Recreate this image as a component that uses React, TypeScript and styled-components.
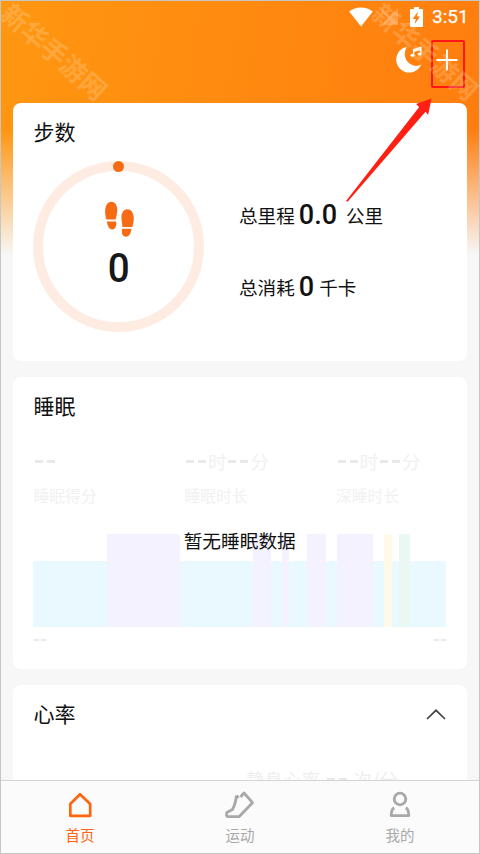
import React from 'react';
import styled, { createGlobalStyle } from 'styled-components';

const Global = createGlobalStyle`
  * { box-sizing: border-box; }
  body { margin: 0; overflow: hidden; }
`;

const cjk = `"Noto Sans CJK SC", sans-serif`;
const roboto = `Roboto, "Noto Sans CJK SC", sans-serif`;

const Screen = styled.div`
  position: relative;
  width: 480px;
  height: 854px;
  overflow: hidden;
  display: flex;
  flex-direction: column;
  border: 1px solid #c6c6c6;
  font-family: ${cjk};
  color: #111;
  background:
    linear-gradient(180deg, rgba(247, 247, 247, 0) 128px, #f7f7f7 254px),
    linear-gradient(100deg, #ff9711 0%, #ff8a10 40%, #ff780e 95%);
`;

const StatusBar = styled.header`
  height: 30px;
  padding: 1px 11px 0 0;
  display: flex;
  align-items: center;
  justify-content: flex-end;
  flex: none;
`;

const Clock = styled.span`
  width: 36px;
  margin-left: 9px;
  font: 400 19px/28px ${roboto};
  -webkit-text-stroke: 0.25px #fff;
  color: #fff;
  white-space: nowrap;
`;

const StatusIcon = styled.svg<{ $gap?: number }>`
  flex: none;
  margin-left: ${p => p.$gap ?? 0}px;
`;

const Actions = styled.div`
  height: 72px;
  flex: none;
  display: flex;
  justify-content: flex-end;
  align-items: flex-start;
  padding: 9px 14px 0 0;
`;

const MoonButton = styled.button`
  border: 0;
  padding: 0;
  background: none;
  width: 28px;
  height: 30px;
  margin: 5px 8px 0 0;
  display: flex;
`;

const AddButton = styled.button`
  width: 34px;
  height: 48px;
  border: 2px solid #ff1717;
  border-radius: 2px;
  padding: 0 3px 8px 0;
  background: none;
  display: flex;
  align-items: center;
  justify-content: center;
`;

const Feed = styled.main`
  flex: 1;
  min-height: 0;
  overflow: hidden;
  padding: 0 12.5px 0 12px;
  display: flex;
  flex-direction: column;
  gap: 16px;
`;

const Card = styled.section<{ $height: number }>`
  height: ${p => p.$height}px;
  flex: none;
  padding: 0 20px;
  border-radius: 8px;
  background: #fff;
`;

const CardHead = styled.div`
  height: 58px;
  display: flex;
  align-items: center;
  justify-content: space-between;
`;

const Title = styled.h2`
  margin: 0;
  padding: 0 0 1px 0.5px;
  font: 400 21px/29px ${cjk};
`;

const StepsBody = styled.div`
  display: flex;
`;

const Ring = styled.div`
  position: relative;
  width: 171px;
  height: 171px;
  border: 10.5px solid #feece3;
  border-radius: 50%;
  display: flex;
  flex-direction: column;
  align-items: center;
  padding-top: 30px;
`;

const RingDot = styled.i`
  position: absolute;
  top: -10.5px;
  left: 69.5px;
  width: 11px;
  height: 11px;
  border-radius: 50%;
  background: #f76b15;
`;

const StepCount = styled.strong`
  margin-top: 9px;
  font: 500 41.5px/42px ${roboto};
  transform: scaleX(0.93);
  color: #16181a;
`;

const Totals = styled.div`
  padding: 37px 0 0 35px;
  display: flex;
  flex-direction: column;
  gap: 38px;
`;

const Total = styled.div`
  display: flex;
  align-items: center;
  height: 34px;
  font: 400 18.6px/34px ${cjk};
  white-space: nowrap;
`;

const Value = styled.b<{ $after: number }>`
  margin: 0 ${p => p.$after}px 0 4px;
  padding-top: 1px;
  font: 500 27px/33px ${roboto};
`;

const Metrics = styled.div`
  display: grid;
  grid-template-columns: 151px 151.5px 1fr;
  margin-top: 10px;
  padding-left: 0.5px;
  color: #f1f1f1;
`;

const Reading = styled.div`
  height: 32px;
  display: flex;
  align-items: center;
  font-size: 18.7px;
  line-height: 32px;
`;

const Dashes = styled.span<{ $small?: boolean }>`
  display: inline-flex;
  align-items: center;
  gap: ${p => (p.$small ? 2 : 4)}px;
  margin: ${p => (p.$small ? '0 1px' : '0 2px 0 1.5px')};
  color: #e9e9e9;
  &::before, &::after {
    content: '';
    width: ${p => (p.$small ? 5 : 8)}px;
    height: ${p => (p.$small ? 2 : 3)}px;
    background: currentColor;
  }
`;

const Caption = styled.div`
  margin-top: 7px;
  font-size: 15.8px;
  line-height: 24px;
`;

const Chart = styled.div`
  position: relative;
  height: 93px;
  margin-top: 26px;
  display: flex;
  align-items: flex-end;
`;

const phaseColors = { light: '#eaf8ff', deep: '#f5f2ff', rem: '#fff9e8', awake: '#eaf7f2' };
type Phase = keyof typeof phaseColors;

const Segment = styled.i<{ $phase: Phase; $span: number }>`
  flex: ${p => p.$span} 1 0;
  height: ${p => (p.$phase === 'light' ? 66.5 : 93)}px;
  border-radius: 1.5px 1.5px 0 0;
  background: ${p => phaseColors[p.$phase]};
`;

const EmptyNote = styled.span`
  position: absolute;
  left: 0;
  right: 0;
  top: -8px;
  text-align: center;
  font-size: 18.7px;
  line-height: 28px;
`;

const ChartLabels = styled.div`
  height: 25px;
  display: flex;
  align-items: center;
  justify-content: space-between;
`;

const HeartReading = styled.div`
  margin: 22px 0 0 213px;
  display: flex;
  align-items: center;
  gap: 5px;
  font-size: 18.5px;
  line-height: 28px;
  color: #eeeeee;
`;

const Nav = styled.nav`
  flex: none;
  height: 73px;
  display: grid;
  grid-template-columns: repeat(3, 160px);
  border-top: 1px solid #d4d4d4;
  background: #fbfbfb;
  margin-left: -1px;
`;

const Tab = styled.a<{ $active?: boolean }>`
  display: flex;
  flex-direction: column;
  align-items: center;
  padding-top: 9px;
  font-size: 14.5px;
  line-height: 22px;
  color: ${p => (p.$active ? '#ff640f' : '#a9a9a9')};
  svg { flex: none; margin-bottom: 2px; }
`;

const Watermark = styled.span<{ $x: number }>`
  position: absolute;
  left: ${p => p.$x}px;
  top: 32px;
  width: 132px;
  transform: rotate(41.5deg);
  font: 700 26px/36px ${cjk};
  white-space: nowrap;
  text-align: center;
  color: rgba(255, 225, 185, 0.27);
  pointer-events: none;
`;

const Pointer = styled.svg`
  position: absolute;
  left: 339px;
  top: 92.5px;
  pointer-events: none;
`;

const segments: [Phase, number][] = [
  ['light', 73.6], ['deep', 73.2], ['light', 73.2], ['deep', 18], ['light', 11],
  ['deep', 7.5], ['light', 18.3], ['deep', 18.2], ['light', 11], ['deep', 36.7],
  ['light', 11], ['rem', 7.5], ['light', 7], ['awake', 11.2], ['light', 36.6],
];

export default function App() {
  return (
    <>
      <Global />
      <Screen>
        <StatusBar>
          <StatusIcon width="24" height="20" viewBox="0 0 24 20" fill="#fff">
            <path d="M.2 4.5C7-1 17-1 23.8 4.5L12 19.5Z" />
          </StatusIcon>
          <StatusIcon $gap={8} width="18" height="19" viewBox="0 0 18 19" fill="#ffad65" opacity=".65">
            <path d="M17 1v17H1Z" /><path d="M1 2 17 18h-3L0 4Z" />
          </StatusIcon>
          <StatusIcon $gap={11} width="13" height="20" viewBox="0 0 13 20">
            <path fill="#fff" d="M4 0h5v2h3q1 0 1 1v16q0 1-1 1H1q-1 0-1-1V3q0-1 1-1h3Z" />
            <path fill="#ff7d10" d="M7.8 4.5 2.8 12h3L4.8 17 10 9.6H7Z" />
          </StatusIcon>
          <Clock>3:51</Clock>
        </StatusBar>

        <Actions>
          <MoonButton aria-label="睡眠音乐">
            <svg width="28" height="30" viewBox="0 0 28 30" fill="none">
              <path fill="#fff" d="M12 1.8A13 13 0 1 0 26.3 19.5Q20 22.8 14.5 18.5C9 14 8.5 7.5 12 1.8Z" />
              <path d="M18.6 10V4.5l7.3-2V8.8M18.6 6.3l7.3-2" stroke="#fff" strokeWidth="1.4" />
              <ellipse cx="17.5" cy="10.3" rx="2" ry="1.6" fill="#fff" />
              <ellipse cx="24.6" cy="9" rx="2" ry="1.6" fill="#fff" />
            </svg>
          </MoonButton>
          <AddButton aria-label="添加">
            <svg width="24" height="24" viewBox="0 0 24 24" stroke="#fff" strokeWidth="2">
              <path d="M1.5 12h21M12 1.5v21" />
            </svg>
          </AddButton>
        </Actions>

        <Feed>
          <Card $height={258}>
            <CardHead><Title>步数</Title></CardHead>
            <StepsBody>
              <Ring>
                <RingDot />
                <svg width="30" height="37" viewBox="0 0 30 37" fill="#f76b15">
                  <path d="M7.8.7C3 .2.8 6 1.2 11.5Q1.3 15 2.2 18.5H11.7C12.2 15 13.5 12 13.3 8.5 13 4 11.2 1 7.8.7Z" />
                  <path d="M2.9 20.5h9.2c1 5-1.5 8.5-4.4 7.9C4.8 28 3.2 24 2.9 20.5Z" />
                  <path d="M23 8.2c-3.5.2-5.8 4-5.6 8.6.1 3.2.9 6 1 9.2h10C29 22.8 30 20 29.7 16 29.3 11.5 27 8 23 8.2Z" />
                  <path d="M18.2 27.7h9.2c-.4 4.8-2.6 8-5.3 8-3.3 0-4.9-3.6-3.9-8Z" />
                </svg>
                <StepCount>0</StepCount>
              </Ring>
              <Totals>
                <Total>总里程<Value $after={9}>0.0</Value>公里</Total>
                <Total>总消耗<Value $after={5}>0</Value>千卡</Total>
              </Totals>
            </StepsBody>
          </Card>

          <Card $height={292}>
            <CardHead><Title>睡眠</Title></CardHead>
            <Metrics>
              <div><Reading><Dashes /></Reading><Caption>睡眠得分</Caption></div>
              <div><Reading><Dashes />时<Dashes />分</Reading><Caption>睡眠时长</Caption></div>
              <div><Reading><Dashes />时<Dashes />分</Reading><Caption>深睡时长</Caption></div>
            </Metrics>
            <Chart>
              {segments.map(([phase, span], i) => <Segment key={i} $phase={phase} $span={span} />)}
              <EmptyNote>暂无睡眠数据</EmptyNote>
            </Chart>
            <ChartLabels><Dashes $small /><Dashes $small /></ChartLabels>
          </Card>

          <Card $height={200}>
            <CardHead>
              <Title>心率</Title>
              <svg width="22" height="14" viewBox="0 0 22 14" fill="none" stroke="#444" strokeWidth="1.7">
                <path d="M2 12 11 3.3l9 8.7" />
              </svg>
            </CardHead>
            <HeartReading>静息心率<Dashes />次/分</HeartReading>
          </Card>
        </Feed>

        <Nav>
          <Tab $active>
            <svg width="32" height="32" viewBox="0 0 32 32" fill="none" stroke="currentColor" strokeWidth="2.7" strokeLinejoin="round">
              <path d="M16 4.3 26.2 14v11.8H6.3V14Z" />
            </svg>
            首页
          </Tab>
          <Tab>
            <svg width="32" height="32" viewBox="0 0 32 32" fill="none" stroke="currentColor" strokeWidth="2.8" strokeLinejoin="round">
              <path d="M12.5 5.5 14.5 8M16.5 7 20 3 28.5 12.7 15 26.7H4Q1.8 26.5 2.8 22.5L8.5 19.5Q11.5 14 12.5 5.5" />
            </svg>
            运动
          </Tab>
          <Tab>
            <svg width="32" height="32" viewBox="0 0 32 32" fill="none" stroke="currentColor" strokeWidth="2.8" strokeLinejoin="round">
              <circle cx="16" cy="9" r="5.8" />
              <path d="M10.2 17.8Q7.2 19.5 7.2 25.6H24.8Q24.8 19.5 21.8 17.8" />
            </svg>
            我的
          </Tab>
        </Nav>

        <Watermark $x={-12}>新华手游网</Watermark>
        <Watermark $x={359}>新华手游网</Watermark>
        <Pointer width="96" height="112" viewBox="0 0 96 112">
          <path fill="#ff2013" d="M91.5 4.5 76 10l3.2 3L6 107l1.6.8L85.5 17.8l2.7 3Z" />
        </Pointer>
      </Screen>
    </>
  );
}
